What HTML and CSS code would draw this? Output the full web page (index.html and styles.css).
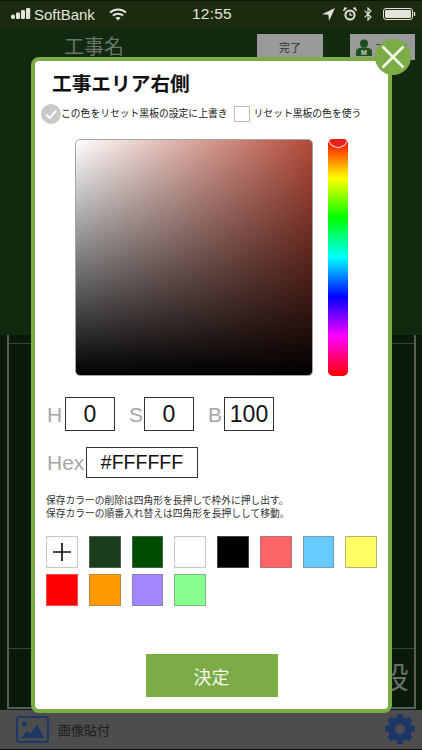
FILE: index.html
```html
<!DOCTYPE html>
<html lang="ja">
<head>
<meta charset="utf-8">
<title>工事エリア右側</title>
<link rel="stylesheet" href="styles.css">
</head>
<body>
<div class="screen">
  <div class="status">
    <svg class="ic-signal" viewBox="0 0 20 12" width="20" height="12"><rect x="0" y="6.5" width="4" height="4.5" rx="1.8" fill="#e4e4dc"/><rect x="5" y="4.5" width="4" height="6.5" rx="1.2" fill="#e4e4dc"/><rect x="10" y="2" width="4" height="9" rx="1.2" fill="#e4e4dc"/><rect x="15" y="0" width="4.2" height="11" rx="1.2" fill="#e4e4dc"/></svg>
    <span class="carrier">SoftBank</span>
    <svg class="ic-wifi" viewBox="0 0 18 13" width="18" height="13"><path d="M1 4.6C5.6.4 12.4.4 17 4.6" fill="none" stroke="#e4e4dc" stroke-width="2"/><path d="M3.9 7.6C6.8 5.2 11.2 5.2 14.1 7.6" fill="none" stroke="#e4e4dc" stroke-width="2"/><path d="M6.4 9.8C8 8.7 10 8.7 11.6 9.8L9 12.6Z" fill="#e4e4dc"/></svg>
    <span class="clock">12:55</span>
    <svg class="ic-loc" viewBox="0 0 13 13" width="13" height="13"><path d="M13 0L0 6.2L6.4 6.8L7 13Z" fill="#e4e4dc"/></svg>
    <svg class="ic-alarm" viewBox="0 0 14 14" width="14" height="14"><circle cx="7" cy="8" r="4.6" fill="none" stroke="#e4e4dc" stroke-width="2"/><path d="M7 5.4V8.2H9.4" fill="none" stroke="#e4e4dc" stroke-width="1.2"/><path d="M.6 4L3.6 1L1.6.8Z M13.4 4L10.4 1L12.4.8Z" fill="#e4e4dc" stroke="#e4e4dc"/></svg>
    <svg class="ic-bt" viewBox="0 0 8 14" width="8" height="14"><path d="M.6 3.6L7 10L4 13V1L7 4L.6 10.4" fill="none" stroke="#e4e4dc" stroke-width="1.1"/></svg>
    <svg class="ic-batt" viewBox="0 0 33 12" width="33" height="12"><rect x=".5" y=".5" width="29" height="11" rx="2.5" fill="none" stroke="#e4e4dc"/><rect x="2" y="2" width="26" height="8" rx="1.2" fill="#e4e4dc"/><rect x="30.8" y="4" width="1.4" height="4" fill="#e4e4dc"/></svg>
  </div>

  <div class="backdrop-head">
    <span class="project-name">工事名</span>
    <span class="head-btn head-done">完了</span>
    <span class="head-btn head-user">
      <svg viewBox="0 0 16 17" width="16" height="17"><circle cx="8" cy="4.5" r="4" fill="#1f4f1e"/><path d="M0 17V12.5C0 10 3 8.5 8 8.5S16 10 16 12.5V17Z" fill="#1f4f1e"/><text x="8" y="15.5" class="user-m">M</text></svg>
      <span>マスタ</span>
    </span>
  </div>

  <div class="backdrop-body">
    <div class="frame">
      <div class="frame-top"></div>
      <div class="frame-mid"></div>
      <div class="frame-low"><span class="frame-text">段</span></div>
    </div>
  </div>

  <div class="toolbar">
    <svg class="ic-image" viewBox="0 0 33 27" width="33" height="27"><rect x="1" y="1" width="31" height="25" rx="2" fill="none" stroke="#1d3866" stroke-width="2"/><circle cx="8.5" cy="8" r="2.6" fill="#1d3866"/><path d="M5 22L11.5 15L14.5 17.5L21 8.5L28.5 22Z" fill="#1d3866"/></svg>
    <span class="toolbar-label">画像貼付</span>
    <svg class="ic-gear" viewBox="0 0 30 30" width="30" height="30">
      <circle cx="15" cy="15" r="8.5" fill="none" stroke="#1d3866" stroke-width="7"/>
      <g fill="#1d3866">
        <rect x="12" y="0" width="6" height="6" rx="1"/>
        <rect x="12" y="0" width="6" height="6" rx="1" transform="rotate(45 15 15)"/>
        <rect x="12" y="0" width="6" height="6" rx="1" transform="rotate(90 15 15)"/>
        <rect x="12" y="0" width="6" height="6" rx="1" transform="rotate(135 15 15)"/>
        <rect x="12" y="0" width="6" height="6" rx="1" transform="rotate(180 15 15)"/>
        <rect x="12" y="0" width="6" height="6" rx="1" transform="rotate(225 15 15)"/>
        <rect x="12" y="0" width="6" height="6" rx="1" transform="rotate(270 15 15)"/>
        <rect x="12" y="0" width="6" height="6" rx="1" transform="rotate(315 15 15)"/>
      </g>
    </svg>
  </div>

  <div class="modal">
    <button class="close" type="button" aria-label="閉じる">
      <svg viewBox="0 0 24 24" width="24" height="24"><path d="M1.5 1.5L22.5 22.5M22.5 1.5L1.5 22.5" stroke="#f4f8ee" stroke-width="2.6" fill="none"/></svg>
    </button>
    <h1 class="title">工事エリア右側</h1>
    <div class="options">
      <span class="check-on">
        <svg viewBox="0 0 20 20" width="20" height="20"><circle cx="10" cy="10" r="10" fill="#c9c9c9"/><path d="M5 10.5L8.6 14L15.2 6.6" fill="none" stroke="#fff" stroke-width="2"/></svg>
      </span>
      <span class="opt-text">この色をリセット黒板の設定に上書き</span>
      <span class="check-off"></span>
      <span class="opt-text">リセット黒板の色を使う</span>
    </div>
    <div class="picker-row">
      <div class="sv-square"></div>
      <div class="hue-bar"><span class="hue-knob"></span></div>
    </div>
    <div class="hsb-row">
      <span class="lbl lbl-h">H</span><span class="val val-sm">0</span>
      <span class="lbl lbl-s">S</span><span class="val val-sm">0</span>
      <span class="lbl lbl-b">B</span><span class="val val-sm">100</span>
    </div>
    <div class="hex-row">
      <span class="lbl lbl-hex">Hex</span><span class="val val-hex">#FFFFFF</span>
    </div>
    <p class="notes">保存カラーの削除は四角形を長押しで枠外に押し出す。<br>保存カラーの順番入れ替えは四角形を長押しして移動。</p>
    <div class="swatches">
      <span class="swatch sw-add"><svg viewBox="0 0 18 18" width="18" height="18"><path d="M9 0V18M0 9H18" stroke="#111" stroke-width="1.7"/></svg></span>
      <span class="swatch sw-1"></span>
      <span class="swatch sw-2"></span>
      <span class="swatch sw-3"></span>
      <span class="swatch sw-4"></span>
      <span class="swatch sw-5"></span>
      <span class="swatch sw-6"></span>
      <span class="swatch sw-7"></span>
      <span class="swatch sw-8"></span>
      <span class="swatch sw-9"></span>
      <span class="swatch sw-10"></span>
      <span class="swatch sw-11"></span>
    </div>
    <button class="confirm" type="button">決定</button>
  </div>
</div>
</body>
</html>
```
FILE: styles.css
```css
* { box-sizing: border-box; }
html, body { margin: 0; padding: 0; }
body {
  font-family: "Liberation Sans", "Noto Sans CJK JP", sans-serif;
  background: #000;
}
.screen {
  position: relative;
  width: 422px;
  height: 750px;
  overflow: hidden;
  display: flex;
  flex-direction: column;
  background: #0a1a0a;
}

/* status bar */
.status {
  height: 27px;
  flex: none;
  display: flex;
  align-items: center;
  background: #1c2a0d;
  border-top: 1px solid #0c1206;
  color: #e4e4dc;
  padding-left: 11px;
}
.ic-signal { flex: none; }
.carrier { font-size: 15px; margin-left: 3px; width: 66px; }
.ic-wifi { margin-left: 9px; flex: none; }
.clock { font-size: 15.5px; font-weight: 500; margin-left: 65px; width: 42px; letter-spacing: .2px; }
.ic-loc { margin-left: 88px; flex: none; }
.ic-alarm { margin-left: 8px; flex: none; }
.ic-bt { margin-left: 7px; flex: none; }
.ic-batt { margin-left: 11px; flex: none; }

/* dimmed page behind the dialog */
.backdrop-head {
  height: 308px;
  flex: none;
  display: flex;
  align-items: flex-start;
  background: #10290f;
  padding-top: 7px;
}
.project-name {
  font-size: 20px;
  line-height: 27px;
  color: #6b756a;
  margin-left: 64px;
  width: 193px;
}
.head-btn {
  height: 26px;
  background: #9a9a9a;
  display: flex;
  align-items: center;
  justify-content: center;
  font-size: 11px;
  color: #2a3a2a;
}
.head-done { width: 66px; }
.head-user { width: 65px; margin-left: 27px; gap: 3px; justify-content: flex-start; padding-left: 6px; }
.user-m { font: bold 7px "Liberation Sans", sans-serif; fill: #ccc; text-anchor: middle; }

.backdrop-body {
  flex: 1;
  min-height: 0;
  padding: 0 6.5px 1px 7px;
}
.frame {
  height: 100%;
  display: flex;
  flex-direction: column;
  border: 2px solid #5b5f5a;
  border-top: 0;
}
.frame-top { height: 9px; flex: none; border-bottom: 1px solid #3c443b; }
.frame-mid { height: 305px; flex: none; border-bottom: 1px solid #3c443b; }
.frame-low {
  flex: 1;
  display: flex;
  justify-content: flex-end;
  align-items: center;
  padding-right: 5px;
}
.frame-text { font-size: 30px; line-height: 1; color: #6b6f6a; }

.toolbar {
  height: 40px;
  flex: none;
  display: flex;
  align-items: center;
  background: #4d4d4d;
  border-bottom: 1px solid #111;
  padding-left: 16px;
}
.ic-image { flex: none; margin-top: -1px; }
.toolbar-label { font-size: 13px; color: #1c1c1c; margin-left: 9px; }
.ic-gear { margin-left: auto; margin-right: 7px; margin-top: -1px; flex: none; }

/* dialog */
.modal {
  position: absolute;
  left: 31px;
  top: 57px;
  width: 361px;
  height: 656px;
  display: flex;
  flex-direction: column;
  background: #fff;
  border: 4px solid #7cac45;
  border-radius: 8px;
  padding-bottom: 12px;
}
.close {
  position: absolute;
  right: -23px;
  top: -22px;
  width: 36px;
  height: 36px;
  padding: 0;
  border: 0;
  border-radius: 50%;
  background: #7cac45;
  display: flex;
  align-items: center;
  justify-content: center;
}
.title {
  margin: 9px 0 0 17px;
  font-size: 19.7px;
  line-height: 28px;
  font-weight: 700;
  color: #111;
}
.options {
  display: flex;
  align-items: center;
  height: 20px;
  margin: 6px 0 0 6px;
}
.check-on { width: 20px; height: 20px; flex: none; }
.check-on svg { display: block; }
.opt-text { font-size: 9.8px; line-height: 20px; color: #222; white-space: nowrap; }
.check-off {
  width: 16px;
  height: 16px;
  flex: none;
  margin: 0 4px 0 6px;
  border: 1px solid #bdbdbd;
  background: #fff;
}
.picker-row {
  display: flex;
  gap: 15px;
  margin: 15px 0 0 40px;
}
.sv-square {
  width: 238px;
  height: 237px;
  border: 1px solid #a5a5a5;
  border-radius: 5px;
  background:
    linear-gradient(to top, #000, rgba(0, 0, 0, 0)),
    linear-gradient(to right, #fff, #b34a38);
}
.hue-bar {
  position: relative;
  width: 20px;
  height: 237px;
  border-radius: 5px;
  overflow: hidden;
  background: linear-gradient(to bottom, #f00, #ff0 16.67%, #0f0 33.33%, #0ff 50%, #00f 66.67%, #f0f 83.33%, #f00);
}
.hue-knob {
  position: absolute;
  left: 0;
  top: -10px;
  width: 20px;
  height: 19px;
  border-radius: 50%;
  background: #e8201c;
  border: 1px solid #f6e4dc;
}
.hsb-row {
  display: flex;
  align-items: center;
  margin: 21px 0 0 12px;
}
.hex-row {
  display: flex;
  align-items: center;
  margin: 16px 0 0 12px;
}
.lbl { font-size: 21px; color: #a6a6a6; line-height: 1; }
.lbl-h { width: 18px; }
.lbl-s { width: 15px; margin-left: 14px; }
.lbl-b { width: 16px; margin-left: 14px; }
.lbl-hex { width: 39px; }
.val {
  display: flex;
  align-items: center;
  justify-content: center;
  border: 1px solid #333;
  color: #111;
  background: #fff;
}
.val-sm { width: 50px; height: 34px; font-size: 23px; }
.val-hex { width: 112px; height: 31px; font-size: 19.5px; }
.notes {
  margin: 16px 0 0 11px;
  font-size: 9.75px;
  line-height: 13px;
  color: #333;
  white-space: nowrap;
}
.swatches {
  display: grid;
  grid-template-columns: repeat(8, 31.75px);
  grid-auto-rows: 31.5px;
  column-gap: 11px;
  row-gap: 6.5px;
  margin: 16px 0 0 11px;
}
.swatch {
  display: flex;
  align-items: center;
  justify-content: center;
  border: 1px solid rgba(120, 120, 120, .55);
}
.sw-add { background: #fff; border-color: #c8c8c8; }
.sw-1 { background: #1a3d1c; }
.sw-2 { background: #004d00; }
.sw-3 { background: #fff; border-color: #c8c8c8; }
.sw-4 { background: #000; }
.sw-5 { background: #ff6666; }
.sw-6 { background: #66ccff; }
.sw-7 { background: #ffff66; }
.sw-8 { background: #ff0000; border-color: rgba(255, 120, 120, .6); }
.sw-9 { background: #ff9900; }
.sw-10 { background: #a385ff; }
.sw-11 { background: #88ff91; }
.confirm {
  margin-top: auto;
  align-self: center;
  width: 132px;
  height: 43px;
  padding: 0;
  border: 0;
  background: #7cac45;
  color: #f6f9f0;
  font-family: inherit;
  font-size: 18px;
}
```
